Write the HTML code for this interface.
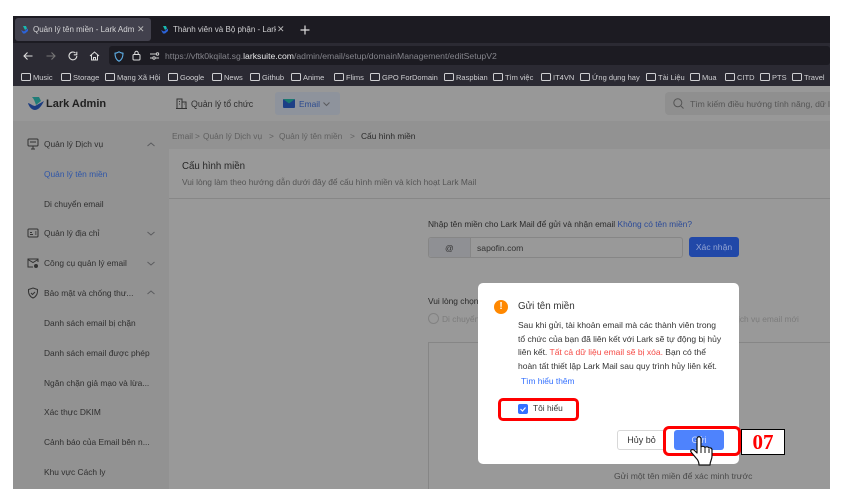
<!DOCTYPE html>
<html><head><meta charset="utf-8">
<style>
html,body{margin:0;padding:0;background:#fff;width:845px;height:497px;overflow:hidden}
body{position:relative;font-family:"Liberation Sans","Noto Sans CJK SC",sans-serif}
.a{position:absolute;white-space:nowrap}
.t{position:absolute;white-space:nowrap;font-size:8.4px;line-height:12px;color:#2f2f2f}
.bm{position:absolute;top:72px;font-size:7.5px;line-height:11px;color:#cfcfd2;white-space:nowrap;padding-left:12px}
.bm:before{content:"";position:absolute;left:0;top:1px;width:8px;height:6px;border:1px solid #cfcfd2;border-radius:1.5px}
svg{position:absolute;overflow:visible}
.h{stroke:#5a5b5e;fill:none;stroke-width:1}
</style></head><body>
<div class="a" style="left:13px;top:16px;width:817px;height:473px;overflow:hidden;background:#999"></div>

<!-- browser chrome -->
<div class="a" style="left:13px;top:16px;width:817px;height:27px;background:#1c1b22"></div>
<div class="a" style="left:13px;top:43px;width:817px;height:3px;background:#2b2a33"></div>
<div class="a" style="left:13px;top:46px;width:817px;height:19px;background:#2b2a33"></div>
<div class="a" style="left:13px;top:65px;width:817px;height:21px;background:#2b2a33"></div>
<div class="a" style="left:109px;top:46px;width:721px;height:19px;background:#1c1b22;border-radius:3px"></div>
<div class="a" style="left:15px;top:18px;width:136px;height:23px;background:#42414d;border-radius:3px"></div>

<svg style="left:20px;top:25px" width="9" height="9" viewBox="0 0 9 9"><path d="M1 5l3 1.500 4-3v2.500l-3 2.500h-2z" fill="#2b63d9"/><path d="M3 1h3l1 2.500-2 1.500z" fill="#19b9b0"/></svg>
<div class="a" style="left:33px;top:24px;font-size:8px;line-height:12px;color:#d4d4d6;width:101px;overflow:hidden">Quản lý tên miền - Lark Admin</div>
<div class="a" style="left:137px;top:23px;font-size:9px;line-height:13px;color:#bbb">✕</div>
<svg style="left:160px;top:25px" width="9" height="9" viewBox="0 0 9 9"><path d="M1 5l3 1.500 4-3v2.500l-3 2.500h-2z" fill="#2b63d9"/><path d="M3 1h3l1 2.500-2 1.500z" fill="#19b9b0"/></svg>
<div class="a" style="left:173px;top:24px;font-size:8px;line-height:12px;color:#cfcfd1;width:103px;overflow:hidden">Thành viên và Bộ phận - Lark Admin</div>
<div class="a" style="left:277px;top:23px;font-size:9px;line-height:13px;color:#bbb">✕</div>
<svg style="left:300px;top:25px" width="10" height="10" viewBox="0 0 10 10"><path d="M5 .5v9M.5 5h9" stroke="#ddd" stroke-width="1.200"/></svg>

<!-- toolbar icons -->
<svg style="left:23px;top:51px" width="10" height="10" viewBox="0 0 10 10"><path d="M9.500 5H1M4.500 1.500L1 5l3.500 3.500" stroke="#ddd" fill="none" stroke-width="1.100"/></svg>
<svg style="left:46px;top:51px" width="10" height="10" viewBox="0 0 10 10"><path d="M.5 5H9M5.500 1.500L9 5 5.500 8.500" stroke="#777" fill="none" stroke-width="1.100"/></svg>
<svg style="left:68px;top:51px" width="10" height="10" viewBox="0 0 10 10"><path d="M8.800 5A3.900 3.900 0 1 1 7.500 2M8.800.8v3H5.800" stroke="#ddd" fill="none" stroke-width="1.100"/></svg>
<svg style="left:89px;top:51px" width="11" height="10" viewBox="0 0 11 10"><path d="M1 5L5.500 1 10 5M2.500 4v5h6V4M4.500 9V6.500h2V9" stroke="#ddd" fill="none" stroke-width="1"/></svg>
<svg style="left:114px;top:51px" width="10" height="11" viewBox="0 0 10 11"><path d="M5 .8c1.500 1 2.700 1.300 4 1.400 0 4-1 6.500-4 8C2 8.700 1 6.200 1 2.200 2.300 2.100 3.500 1.800 5 .8z" stroke="#5fb0e8" fill="none" stroke-width="1.100"/></svg>
<svg style="left:132px;top:50px" width="9" height="11" viewBox="0 0 9 11"><rect x="1" y="4.500" width="7" height="5.500" rx="1" stroke="#ddd" fill="none"/><path d="M2.800 4.500V3a1.700 1.700 0 0 1 3.400 0v1.500" stroke="#ddd" fill="none"/></svg>
<svg style="left:150px;top:52px" width="9" height="8" viewBox="0 0 9 8"><path d="M0 2h6M0 6h3M5 6h4" stroke="#ccc" stroke-width="1"/><circle cx="7.500" cy="2" r="1.200" fill="none" stroke="#ccc"/><circle cx="4" cy="6" r="1.200" fill="none" stroke="#ccc"/></svg>
<div class="a" style="left:165px;top:50px;font-size:8.650px;line-height:12px;color:#85858c">https://vftk0kqilat.sg.<span style="color:#e8e8ea">larksuite.com</span>/admin/email/setup/domainManagement/editSetupV2</div>

<!-- bookmarks -->
<div class="bm" style="left:21px">Music</div>
<div class="bm" style="left:61px">Storage</div>
<div class="bm" style="left:105px">Mạng Xã Hội</div>
<div class="bm" style="left:168px">Google</div>
<div class="bm" style="left:212px">News</div>
<div class="bm" style="left:250px">Github</div>
<div class="bm" style="left:291px">Anime</div>
<div class="bm" style="left:334px">Flims</div>
<div class="bm" style="left:370px">GPO ForDomain</div>
<div class="bm" style="left:444px">Raspbian</div>
<div class="bm" style="left:493px">Tìm việc</div>
<div class="bm" style="left:541px">IT4VN</div>
<div class="bm" style="left:580px">Ứng dụng hay</div>
<div class="bm" style="left:646px">Tài Liệu</div>
<div class="bm" style="left:690px">Mua</div>
<div class="bm" style="left:725px">CITD</div>
<div class="bm" style="left:760px">PTS</div>
<div class="bm" style="left:792px">Travel</div>

<!-- app header -->
<div class="a" style="left:13px;top:86px;width:817px;height:35px;background:#989898"></div>
<svg style="left:28px;top:97px" width="16" height="13" viewBox="0 0 16 13"><path d="M0 6c3 1 5 3 7 3l9-5c-2 4-5 9-9 9-3 0-6-3-7-7z" fill="#1c3c80"/><path d="M4 0h7l2 4-5 4C7 5 6 2 4 0z" fill="#1f7d78"/></svg>
<div class="a" style="left:46px;top:97px;font-size:11px;line-height:15px;font-weight:bold;color:#1f1f1f">Lark Admin</div>
<svg style="left:176px;top:98px" width="11" height="11" viewBox="0 0 11 11"><path d="M1 10.500V1h5v9.500M6 4h4v6.500M0 10.500h11M3 3.500h1M3 6h1M8 6h.5" stroke="#333" fill="none"/></svg>
<div class="t" style="left:191px;top:98px;font-size:8.800px">Quản lý tổ chức</div>
<div class="a" style="left:275px;top:92px;width:65px;height:23px;background:#8e939c;border-radius:3px"></div>
<svg style="left:283px;top:99px" width="12" height="9" viewBox="0 0 12 9"><rect width="12" height="9" rx="1" fill="#1c3f86"/><path d="M0 0l6 4.500L12 0z" fill="#1a7a70"/></svg>
<div class="t" style="left:299px;top:98px;color:#2b4a8f">Email</div>
<svg style="left:323px;top:102px" width="7" height="4" viewBox="0 0 7 4"><path d="M.5.500l3 3 3-3" class="h" stroke-width=".8"/></svg>
<div class="a" style="left:665px;top:92px;width:165px;height:23px;background:#8f8f8f;border-radius:4px 0 0 4px"></div>
<svg style="left:673px;top:98px" width="11" height="11" viewBox="0 0 11 11"><circle cx="4.800" cy="4.800" r="4" stroke="#555" fill="none"/><path d="M8 8l2.500 2.500" stroke="#555"/></svg>
<div class="t" style="left:690px;top:98px;font-size:8.600px;color:#555;width:140px;overflow:hidden">Tìm kiếm điều hướng tính năng, dữ liệu</div>

<!-- sidebar -->
<div class="a" style="left:13px;top:121px;width:156px;height:368px;background:#929292"></div>
<div class="a" style="left:169px;top:121px;width:661px;height:28px;background:#929292"></div>
<div class="a" style="left:169px;top:149px;width:661px;height:340px;background:#999"></div>
<div class="a" style="left:169px;top:198px;width:661px;height:1px;background:#878787"></div>

<svg style="left:27px;top:138px" width="12" height="12" viewBox="0 0 12 12"><rect x="1" y="1" width="10" height="7" rx="1" stroke="#333" fill="none"/><path d="M4 11h4M6 8v3M3 4h6" stroke="#333"/></svg>
<div class="t" style="left:44px;top:138px">Quản lý Dịch vụ</div>
<svg style="left:147px;top:142px" width="8" height="5" viewBox="0 0 8 5"><path d="M.5 4l3.500-3 3.500 3" class="h"/></svg>
<div class="t" style="left:44px;top:168px;color:#2f56a8">Quản lý tên miền</div>
<div class="t" style="left:44px;top:198px">Di chuyển email</div>
<svg style="left:27px;top:228px" width="12" height="10" viewBox="0 0 12 10"><rect x="1" y="1" width="10" height="8" rx="1" stroke="#333" fill="none"/><path d="M3 6.500h3M3 4.500h2M8 4h1.500M8 6h1.500" stroke="#333"/></svg>
<div class="t" style="left:44px;top:227px">Quản lý địa chỉ</div>
<svg style="left:147px;top:231px" width="8" height="5" viewBox="0 0 8 5"><path d="M.5 1l3.500 3 3.500-3" class="h"/></svg>
<svg style="left:27px;top:258px" width="12" height="11" viewBox="0 0 12 11"><path d="M11 4V1H1v8h5M1 1.500l5 3 5-3" stroke="#333" fill="none"/><circle cx="9" cy="8" r="2" fill="#333"/></svg>
<div class="t" style="left:44px;top:257px">Công cụ quản lý email</div>
<svg style="left:147px;top:261px" width="8" height="5" viewBox="0 0 8 5"><path d="M.5 1l3.500 3 3.500-3" class="h"/></svg>
<svg style="left:27px;top:287px" width="12" height="12" viewBox="0 0 12 12"><path d="M6 1l4.500 1.500c.3 4-1 7-4.500 8.500C2.500 9.500 1.200 6.500 1.500 2.500z" stroke="#333" fill="none"/><path d="M4 6l1.500 1.500L8 5" stroke="#333" fill="none"/></svg>
<div class="t" style="left:44px;top:287px">Bảo mật và chống thư...</div>
<svg style="left:147px;top:290px" width="8" height="5" viewBox="0 0 8 5"><path d="M.5 4l3.500-3 3.500 3" class="h"/></svg>
<div class="t" style="left:44px;top:317px">Danh sách email bị chặn</div>
<div class="t" style="left:44px;top:347px">Danh sách email được phép</div>
<div class="t" style="left:44px;top:377px">Ngăn chặn giả mạo và lừa...</div>
<div class="t" style="left:44px;top:406px">Xác thực DKIM</div>
<div class="t" style="left:44px;top:436px">Cảnh báo của Email bên n...</div>
<div class="t" style="left:44px;top:466px">Khu vực Cách ly</div>

<!-- breadcrumb -->
<div class="t" style="left:172px;top:130px;color:#5f5f5f">Email</div>
<div class="t" style="left:195px;top:130px;color:#5f5f5f">&gt;</div>
<div class="t" style="left:203px;top:130px;color:#5f5f5f">Quản lý Dịch vụ</div>
<div class="t" style="left:269px;top:130px;color:#5f5f5f">&gt;</div>
<div class="t" style="left:279px;top:130px;color:#5f5f5f">Quản lý tên miền</div>
<div class="t" style="left:350px;top:130px;color:#5f5f5f">&gt;</div>
<div class="t" style="left:361px;top:130px;color:#2a2a2a">Cấu hình miền</div>
<div class="a" style="left:182px;top:160px;font-size:9.700px;line-height:14px;color:#262626">Cấu hình miền</div>
<div class="t" style="left:182px;top:176px;color:#555">Vui lòng làm theo hướng dẫn dưới đây để cấu hình miền và kích hoạt Lark Mail</div>

<!-- form -->
<div class="t" style="left:428px;top:218px;color:#2a2a2a">Nhập tên miền cho Lark Mail để gửi và nhận email <span style="color:#2b4a98">Không có tên miền?</span></div>
<div class="a" style="left:428px;top:237px;width:253px;height:19px;border:1px solid #868686;border-radius:3px;background:#999"></div>
<div class="a" style="left:429px;top:238px;width:41px;height:19px;background:#8f9094;border-right:1px solid #868686;border-radius:3px 0 0 3px"></div>
<div class="t" style="left:445px;top:242px;color:#333;font-size:8.600px">@</div>
<div class="t" style="left:477px;top:242px;color:#333;font-size:8.600px">sapofin.com</div>
<div class="a" style="left:689px;top:237px;width:50px;height:20px;background:#2148a8;border-radius:3px;color:#95a6d4;font-size:8.600px;line-height:20px;text-align:center">Xác nhận</div>
<div class="t" style="left:428px;top:295px;color:#2a2a2a">Vui lòng chọn</div>
<div class="a" style="left:428px;top:313px;width:9px;height:9px;border:1px solid #828282;border-radius:50%"></div>
<div class="t" style="left:442px;top:313px;color:#7c7c7c">Di chuyển</div>
<div class="t" style="left:738px;top:313px;color:#7c7c7c">ịch vụ email mới</div>
<div class="a" style="left:428px;top:342px;width:402px;height:147px;border-left:1px solid #868686;border-top:1px solid #868686;box-sizing:border-box"></div>
<div class="t" style="left:614px;top:470px;color:#4a4a4a;font-size:8.600px">Gửi một tên miền để xác minh trước</div>

<!-- dialog -->
<div class="a" style="left:478px;top:283px;width:261px;height:181px;background:#fff;border-radius:5px"></div>
<div class="a" style="left:494px;top:300px;width:14px;height:14px;background:#ff8800;border-radius:50%;color:#fff;font-size:10px;font-weight:bold;line-height:14px;text-align:center">!</div>
<div class="a" style="left:518px;top:299px;font-size:9.800px;line-height:15px;color:#333">Gửi tên miền</div>
<div class="t" style="left:518px;top:319px;color:#333;font-size:8.500px">Sau khi gửi, tài khoản email mà các thành viên trong</div>
<div class="t" style="left:518px;top:333px;color:#333;font-size:8.500px">tổ chức của bạn đã liên kết với Lark sẽ tự động bị hủy</div>
<div class="t" style="left:518px;top:346px;color:#333;font-size:8.500px">liên kết. <span style="color:#f54a45">Tất cả dữ liệu email sẽ bị xóa.</span> Bạn có thể</div>
<div class="t" style="left:518px;top:360px;color:#333;font-size:8.500px">hoàn tất thiết lập Lark Mail sau quy trình hủy liên kết.</div>
<div class="t" style="left:521px;top:375px;color:#3370ff">Tìm hiểu thêm</div>

<div class="a" style="left:518px;top:404px;width:10px;height:10px;background:#3370ff;border-radius:2px"></div>
<svg style="left:518px;top:404px" width="10" height="10" viewBox="0 0 10 10"><path d="M2.500 5l2 2 3-3.500" stroke="#fff" fill="none" stroke-width="1.200"/></svg>
<div class="t" style="left:533px;top:402px;color:#333">Tôi hiểu</div>
<div class="a" style="left:498px;top:398px;width:81px;height:23px;box-sizing:border-box;border:3px solid #f00;border-radius:5px"></div>

<div class="a" style="left:617px;top:430px;width:49px;height:20px;box-sizing:border-box;border:1px solid #d8d8d8;border-radius:3px;color:#333;font-size:9px;line-height:18px;text-align:center">Hủy bỏ</div>
<div class="a" style="left:674px;top:430px;width:50px;height:20px;background:#4e83fd;border-radius:3px;color:#cfdcff;font-size:9px;line-height:20px;text-align:center">Gửi</div>
<div class="a" style="left:663px;top:426px;width:78px;height:30px;box-sizing:border-box;border:3px solid #f00;border-radius:6px"></div>
<div class="a" style="left:741px;top:429px;width:44px;height:26px;box-sizing:border-box;border:1px solid #000;background:#fff;color:#f00;font-family:'Liberation Serif',serif;font-weight:bold;font-size:21px;line-height:24px;text-align:center">07</div>

<!-- hand cursor -->
<svg style="left:690px;top:435px" width="26" height="33" viewBox="0 0 26 33"><path d="M7 4c0-3 4-3 4 0v8c1-1 3-1 4 .5 1-1 3-1 4 .5 1-.5 3 0 3 2v6c0 4-2 5-2 9H9c0-3-1-5-3-7l-5-6c-1-2 1-3 3-2l3 3z" fill="#fff" stroke="#111" stroke-width="1.200" stroke-linejoin="round"/><path d="M11 12v6M15 13v5M19 14v4" stroke="#111" stroke-width="1"/></svg>
</body></html>
